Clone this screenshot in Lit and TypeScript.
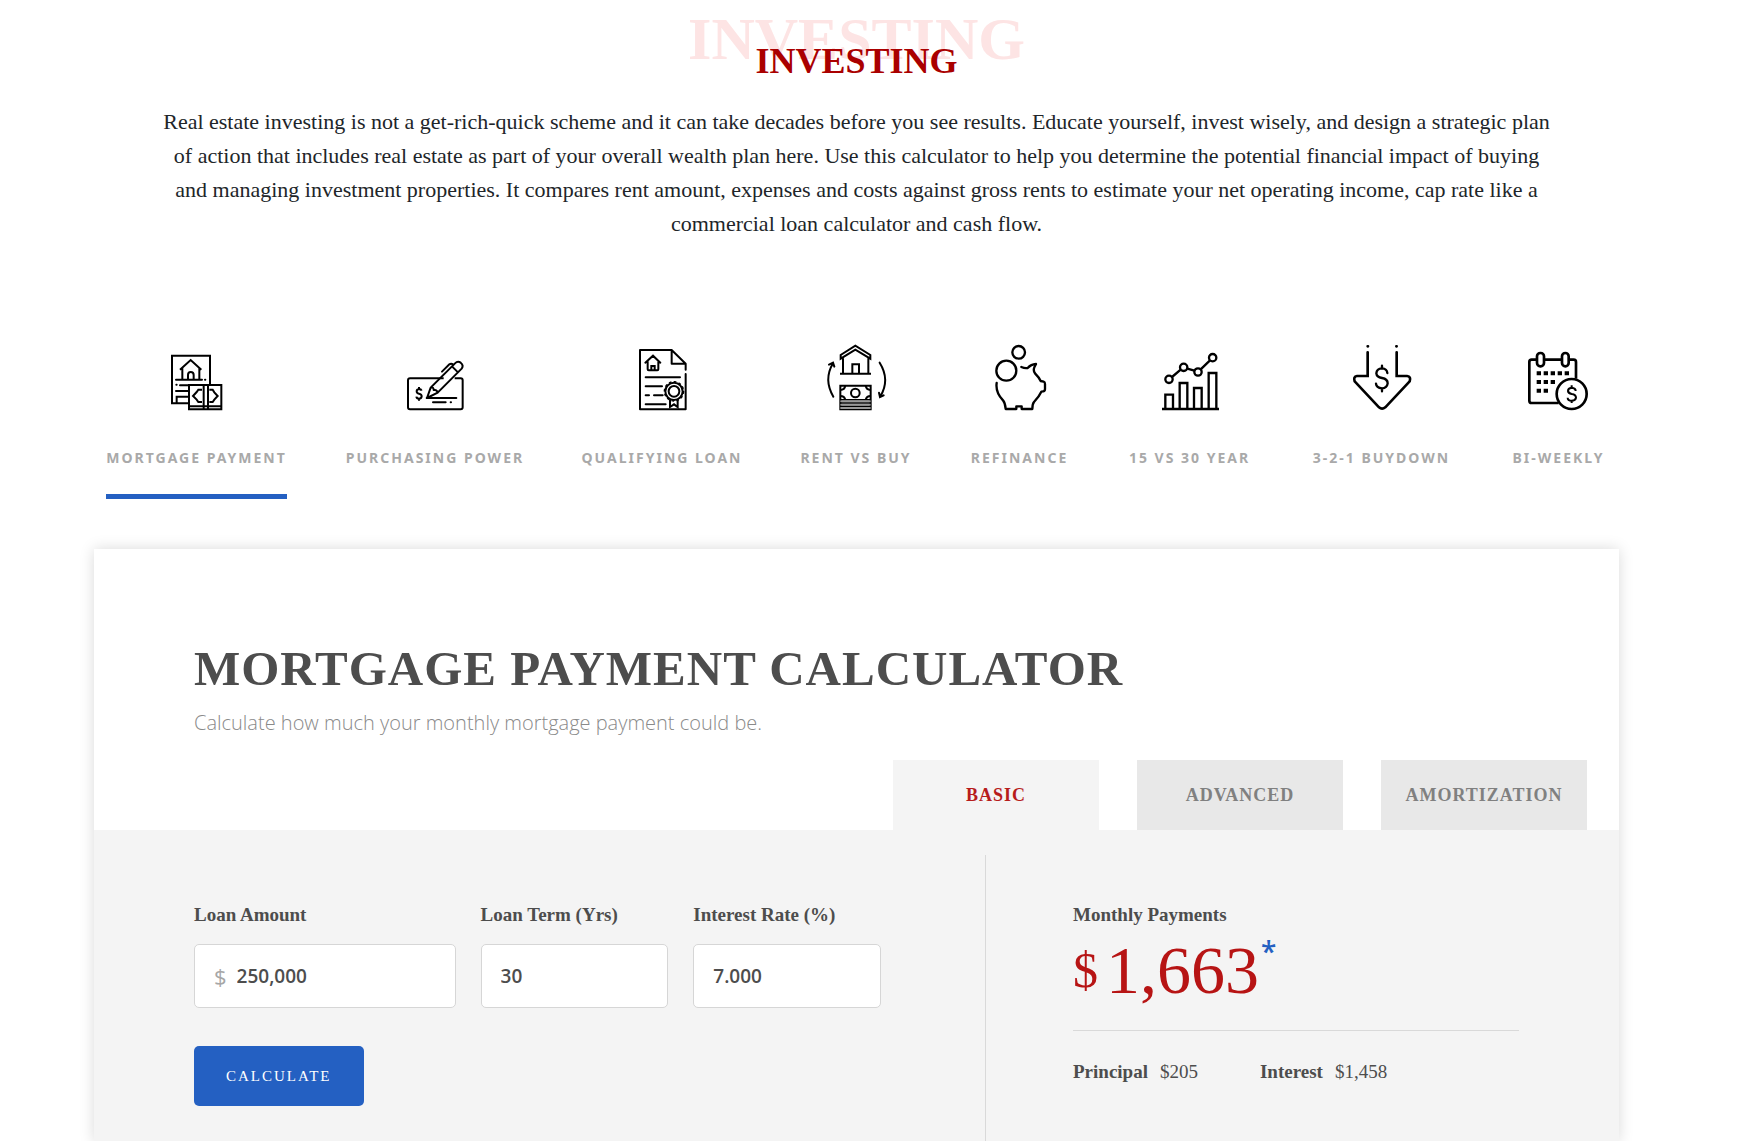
import { LitElement, html, css, svg } from "lit";
import { customElement, state } from "lit/decorators.js";
import { classMap } from "lit/directives/class-map.js";

const CALCULATORS = [
  {
    label: "Mortgage Payment",
    box: "231 45 180 195",
    art: svg`
      <path d="M294 220H246V77H360V162"/>
      <path d="M270 119L302 90L334 119M277 114V149M328 114V149M294 148V135Q294 126 302 126Q311 126 311 135V148"/>
      <path d="M258 149H336M345 149H346M259 164H260M270 166H296M258 183H294M260 218V200H294" stroke-linecap="round"/>
      <path d="M297 165H394V238H297ZM297 229H394M341 165V238M354 165V238"/>
      <path d="M336 179H325L320 186L309 198L320 209L325 216H336M358 179H368L373 187L383 198L373 209L368 216H358"/>`,
  },
  {
    label: "Purchasing Power",
    box: "945 45 180 195",
    art: svg`
      <path d="M1061 145H960Q954 145 954 151V232Q954 238 960 238H1112Q1118 238 1118 232V151Q1118 145 1112 145H1094"/>
      <path d="M1099 204H1010" stroke-linecap="round"/>
      <path d="M1011 204L1022 173L1095 100Q1103 92 1112 98Q1122 106 1115 116L1043 188ZM1022 173Q1031 170 1031 180Q1041 178 1043 188M1086 109L1104 127" stroke-linejoin="round" stroke-linecap="round"/>
      <path d="M1056 125L1078 103Q1084 99 1090 104M1029 217H1067M1082 217H1083" stroke-linecap="round"/>
      <path d="M995 182Q993 177 987 177Q980 178 980 184Q980 190 987 191Q995 192 995 199Q994 206 987 206Q980 206 979 200M987 171V177M987 206V212"/>`,
  },
  {
    label: "Qualifying Loan",
    box: "246 45 180 195",
    art: svg`
      <path d="M407 119V101L365 60H270V238H407V132M365 60V101H407" stroke-linejoin="round" stroke-linecap="round"/>
      <path d="M286 98L309 77L331 98M293 95V118Q293 121 296 121H322Q325 121 325 118V95M304 120V108H314V120" stroke-linecap="round"/>
      <path d="M287 142H390M287 169H336M287 196H297M312 196H338M287 223H347" stroke-linecap="round"/>
      <circle cx="372" cy="184" r="16"/>
      <circle cx="372" cy="184" r="26"/>
      <circle cx="372" cy="184" r="29" stroke-width="4" stroke-dasharray="8 7"/>
      <path d="M360 209V231L372 223L383 231V209"/>`,
  },
  {
    label: "Rent vs Buy",
    box: "829 45 180 195",
    art: svg`
      <path d="M873 86V75L917 47L962 75V86L917 59ZM880 85V130M956 85V130M871 131H964M908 130V103H928V130"/>
      <path d="M872 167H963V238H872Z"/>
      <path d="M872 214H963M872 224H963M872 234H963" stroke="#999"/>
      <path d="M872 209H963M872 219H963M872 229H963" stroke-width="4"/>
      <circle cx="917" cy="189" r="13"/>
      <path d="M872 180Q885 180 887 167M963 180Q950 180 948 167M872 198Q884 198 887 209M963 198Q951 198 948 209"/>
      <path d="M851 200Q821 149 850 100M838 104L850 98L854 110M990 98Q1022 149 992 199M988 188L991 201L1002 196" stroke-linecap="round"/>`,
  },
  {
    label: "Refinance",
    box: "119 45 180 195",
    art: svg`
      <g stroke-width="7">
        <circle cx="205" cy="67" r="19"/>
        <circle cx="168" cy="122" r="30"/>
        <path d="M213 111Q224 116 232 114Q242 103 257 102L252 112Q248 122 254 130Q266 142 271 153L280 155Q284 156 284 162V178Q284 185 273 185Q266 200 251 216Q246 222 246 237H214V229H198V237H166Q165 220 158 211Q135 187 139 159" stroke-linecap="round" stroke-linejoin="round"/>
      </g>`,
  },
  {
    label: "15 vs 30 Year",
    box: "630 45 180 195",
    art: svg`
      <g stroke-width="7">
        <path d="M636 237H807M646 237V194H669V237M689 237V159H712V237M732 237V174H755V237M776 237V129H799V237"/>
        <circle cx="657" cy="148" r="11"/><circle cx="701" cy="112" r="11"/><circle cx="744" cy="126" r="11"/><circle cx="788" cy="83" r="11"/>
        <path d="M666 141L692 119M712 116L733 122M752 118L780 91"/>
      </g>`,
  },
  {
    label: "3-2-1 Buydown",
    box: "216 45 180 195",
    art: svg`
      <g stroke-width="8" stroke-linecap="round">
        <path d="M263 67V138H231Q219 140 224 154L297 232Q306 240 316 232L389 154Q394 140 381 138H350V67M263 49H264M349 49H350"/>
        <path d="M322 129Q321 116 306 115Q290 116 289 130Q290 141 306 144Q323 147 323 160Q321 174 306 175Q289 174 288 161M306 107V115M306 175V184" stroke-width="7"/>
      </g>`,
  },
  {
    label: "Bi-Weekly",
    box: "747 45 180 195",
    art: svg`
      <g stroke-width="8">
        <path d="M770 89H755Q748 89 748 96V212Q748 219 755 219H836M794 89H844M868 89H881Q888 89 888 96V146"/>
        <rect x="771" y="69" width="21" height="40" rx="10"/><rect x="846" y="69" width="20" height="40" rx="10"/>
        <path d="M770 130H868M770 156H826M770 182H806" stroke-width="12" stroke-dasharray="13 8"/>
        <circle cx="875" cy="192" r="45"/>
        <path d="M887 183Q887 174 875 173Q864 174 864 183Q865 190 875 192Q888 194 888 203Q886 212 875 212Q863 212 863 203M875 166V173M875 212V219" stroke-width="6"/>
      </g>`,
  },
];

const TABS = ["Basic", "Advanced", "Amortization"];

const money = (n: number) => Math.round(n).toLocaleString("en-US");

@customElement("app-root")
export class AppRoot extends LitElement {
  @state() private active = 0;
  @state() private tab = 0;
  @state() private result = AppRoot.compute(250000, 30, 7);

  static compute(amount: number, years: number, rate: number) {
    const r = rate / 1200;
    const payment = r ? (amount * r) / (1 - Math.pow(1 + r, -years * 12)) : amount / (years * 12);
    const interest = amount * r;
    return { payment, interest, principal: payment - interest };
  }

  private submit(e: Event) {
    e.preventDefault();
    const data = new FormData(e.target as HTMLFormElement);
    const num = (k: string) => Number(String(data.get(k)).replace(/,/g, "")) || 0;
    this.result = AppRoot.compute(num("amount"), num("term") || 1, num("rate"));
  }

  static styles = css`
    * { box-sizing: border-box; }
    :host {
      display: flex;
      flex-direction: column;
      min-height: 100vh;
      padding: 0 129px 0 94px;
      background: #fff;
      color: #4d4d4d;
      font-family: "Liberation Serif", "Times New Roman", serif;
      overflow: hidden;
    }
    h1, h2, p, dl, dd, form { margin: 0; }
    button { border: 0; cursor: pointer; font-family: inherit; text-transform: uppercase; white-space: nowrap; }

    .intro { text-align: center; }
    .heading { position: relative; padding-top: 39px; font-size: 36px; line-height: 44px; color: #aa0000; }
    .ghost { position: absolute; top: 9px; left: 0; right: 0; font-size: 60px; line-height: 60px; color: #fde4e4; }
    .front { position: relative; }
    .lead { max-width: 1395px; margin: 22px auto 0; font-size: 22px; line-height: 34px; color: #212529; }

    .kinds {
      display: grid;
      grid-template-columns: 181fr 180fr 158fr 114fr 97fr 127fr 141fr 97fr;
      gap: 58px;
      margin-top: 104px;
      padding: 0 12px;
    }
    .kind {
      display: flex;
      flex-direction: column;
      align-items: center;
      gap: 38px;
      min-width: 0;
      padding: 0 0 26px;
      border-bottom: 5px solid transparent;
      background: none;
      color: #a9a9a9;
      font: 700 14px/20px "Noto Sans", "Open Sans", sans-serif;
      letter-spacing: 2px;
    }
    .kind.on { border-color: #2460c2; }
    .icon { width: 60px; height: 65px; fill: none; stroke: #000; stroke-width: 6; overflow: visible; }

    .card { flex: 1; display: flex; flex-direction: column; margin-top: 50px; box-shadow: 0 0 14px rgba(0, 0, 0, 0.15); }
    .title { padding: 92px 100px 0; font-size: 49px; line-height: 56px; letter-spacing: 1px; text-transform: uppercase; }
    .sub { margin-top: 12px; padding: 0 100px; color: #8a8a8a; font: 300 20px/28px "Open Sans", sans-serif; }
    .tabs { display: flex; justify-content: flex-end; gap: 38px; margin-top: 23px; padding-right: 32px; }
    .tab { width: 206px; height: 70px; padding: 0; background: #e8e8e8; color: #808080; font-size: 18px; font-weight: 700; letter-spacing: 1px; }
    .tab.on { background: #f4f4f4; color: #b71c1c; }

    .panel { flex: 1; display: grid; grid-template-columns: 891fr 634fr; padding-top: 25px; background: #f4f4f4; font-size: 19px; line-height: 24px; }
    .form { padding: 48px 104px 36px 100px; }
    .fields { display: grid; grid-template-columns: 262fr 188fr 188fr; gap: 25px; }
    .field { display: flex; flex-direction: column; gap: 17px; min-width: 0; }
    .field label, .name { font-weight: 700; white-space: nowrap; }
    .box { display: flex; align-items: center; gap: 10px; height: 64px; padding: 0 19px; border: 1px solid #d6d6d6; border-radius: 5px; background: #fff; font-family: "Open Sans", sans-serif; }
    .unit { color: #a6a6a6; font-size: 22px; }
    .input { flex: 1; min-width: 0; padding: 0; border: 0; outline: 0; background: none; color: #4d4d4d; font: 600 19px/28px "Open Sans", sans-serif; }
    .go { height: 60px; margin-top: 38px; padding: 0 32px; border-radius: 5px; background: #2460c2; color: #fff; font-size: 15px; letter-spacing: 2px; }

    .result { padding: 48px 100px 36px 87px; border-left: 1px solid #d9d9d9; }
    .total { display: flex; align-items: center; gap: 8px; margin-top: 5px; padding-bottom: 22px; border-bottom: 1px solid #d9d9d9; color: #b71414; font-size: 68px; line-height: 76px; }
    .sign { font-size: 50px; }
    .value { display: flex; align-items: flex-start; gap: 2px; }
    .star { color: #2460c2; font: 600 28px/38px "Open Sans", sans-serif; }
    .split { display: flex; gap: 62px; margin-top: 29px; }
    .pair { display: flex; gap: 12px; }
  `;

  render() {
    const { payment, interest, principal } = this.result;
    return html`
      <header class="intro">
        <h1 class="heading"><span class="ghost" aria-hidden="true">INVESTING</span><span class="front">INVESTING</span></h1>
        <p class="lead">
          Real estate investing is not a get-rich-quick scheme and it can take decades before you see results. Educate
          yourself, invest wisely, and design a strategic plan of action that includes real estate as part of your
          overall wealth plan here. Use this calculator to help you determine the potential financial impact of buying
          and managing investment properties. It compares rent amount, expenses and costs against gross rents to
          estimate your net operating income, cap rate like a commercial loan calculator and cash flow.
        </p>
      </header>

      <nav class="kinds">
        ${CALCULATORS.map((c, i) => html`
          <button type="button" class=${classMap({ kind: true, on: i === this.active })} @click=${() => (this.active = i)}>
            <svg class="icon" viewBox=${c.box} aria-hidden="true">${c.art}</svg>
            <span>${c.label}</span>
          </button>`)}
      </nav>

      <main class="card">
        <h2 class="title">Mortgage Payment Calculator</h2>
        <p class="sub">Calculate how much your monthly mortgage payment could be.</p>
        <div class="tabs" role="tablist">
          ${TABS.map((t, i) => html`
            <button type="button" role="tab" aria-selected=${i === this.tab ? "true" : "false"}
              class=${classMap({ tab: true, on: i === this.tab })} @click=${() => (this.tab = i)}>${t}</button>`)}
        </div>
        <div class="panel">
          <form class="form" @submit=${this.submit}>
            <div class="fields">
              <div class="field">
                <label for="amount">Loan Amount</label>
                <div class="box"><span class="unit">$</span><input class="input" id="amount" name="amount" value="250,000" /></div>
              </div>
              <div class="field">
                <label for="term">Loan Term (Yrs)</label>
                <div class="box"><input class="input" id="term" name="term" value="30" /></div>
              </div>
              <div class="field">
                <label for="rate">Interest Rate (%)</label>
                <div class="box"><input class="input" id="rate" name="rate" value="7.000" /></div>
              </div>
            </div>
            <button type="submit" class="go">Calculate</button>
          </form>
          <section class="result">
            <div class="name">Monthly Payments</div>
            <div class="total">
              <span class="sign">$</span>
              <span class="value">${money(payment)}<span class="star">*</span></span>
            </div>
            <dl class="split">
              <div class="pair"><dt class="name">Principal</dt><dd>$${money(principal)}</dd></div>
              <div class="pair"><dt class="name">Interest</dt><dd>$${money(interest)}</dd></div>
            </dl>
          </section>
        </div>
      </main>
    `;
  }
}
